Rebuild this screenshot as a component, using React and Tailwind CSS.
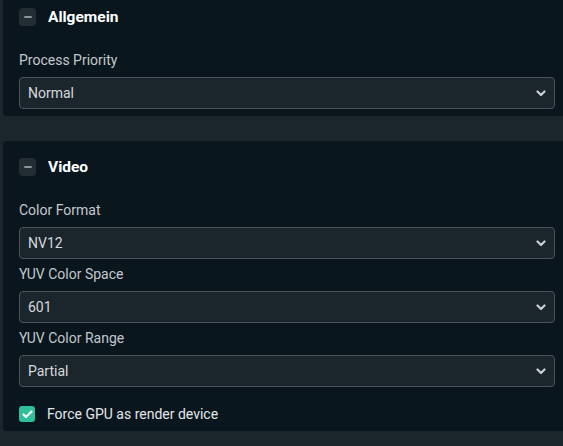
function Chevron() {
  return (
    <svg width="10" height="7" viewBox="0 0 10 7" className="text-[#c9ced2]">
      <path d="M1.5 1.5 L5 5 L8.5 1.5" fill="none" stroke="currentColor" strokeWidth="2.2" strokeLinecap="round" strokeLinejoin="round" />
    </svg>
  )
}

function SectionHeader({ title }) {
  return (
    <div className="flex items-center gap-3 h-5">
      <div className="w-[17px] h-[18px] rounded bg-[#222d34] flex items-center justify-center">
        <div className="w-[8px] h-[2px] bg-[#8b959c] rounded-full" />
      </div>
      <span className="text-[15.5px] font-bold text-white leading-5">{title}</span>
    </div>
  )
}

function SelectField({ label, value }) {
  return (
    <div>
      <div className="text-[14px] leading-5 text-[#c3c8cc] mb-[7px]">{label}</div>
      <div className="w-[536px] h-8 rounded border border-[#48535b] bg-[#1a252c] flex items-center justify-between pl-[8px] pr-[8px]">
        <span className="text-[14px] text-[#d6dadd]">{value}</span>
        <Chevron />
      </div>
    </div>
  )
}

export default function App() {
  return (
    <div className="w-[563px] h-[446px] overflow-hidden bg-[#1b252c] pl-[3px]" style={{ fontFamily: 'Roboto, "Liberation Sans", sans-serif' }}>
      <div className="w-[600px] bg-[#0a161d] rounded-b pt-[7px] pb-[7px] px-4">
        <SectionHeader title="Allgemein" />
        <div className="mt-[23px]">
          <SelectField label="Process Priority" value="Normal" />
        </div>
      </div>

      <div className="w-[600px] mt-[25px] bg-[#0a161d] rounded pt-4 pb-[7px] px-4">
        <SectionHeader title="Video" />
        <div className="mt-[23px] flex flex-col gap-[5px]">
          <SelectField label="Color Format" value="NV12" />
          <SelectField label="YUV Color Space" value="601" />
          <SelectField label="YUV Color Range" value="Partial" />
        </div>
        <div className="mt-[17px] h-5 flex items-center gap-3">
          <div className="w-4 h-4 rounded-[3px] bg-[#2fbf9b] flex items-center justify-center">
            <svg width="11" height="9" viewBox="0 0 11 9">
              <path d="M1.5 4.5 L4 7 L9.5 1.5" fill="none" stroke="white" strokeWidth="2.2" strokeLinecap="round" strokeLinejoin="round" />
            </svg>
          </div>
          <span className="text-[14px] text-[#e4e7e9]">Force GPU as render device</span>
        </div>
      </div>
    </div>
  )
}
